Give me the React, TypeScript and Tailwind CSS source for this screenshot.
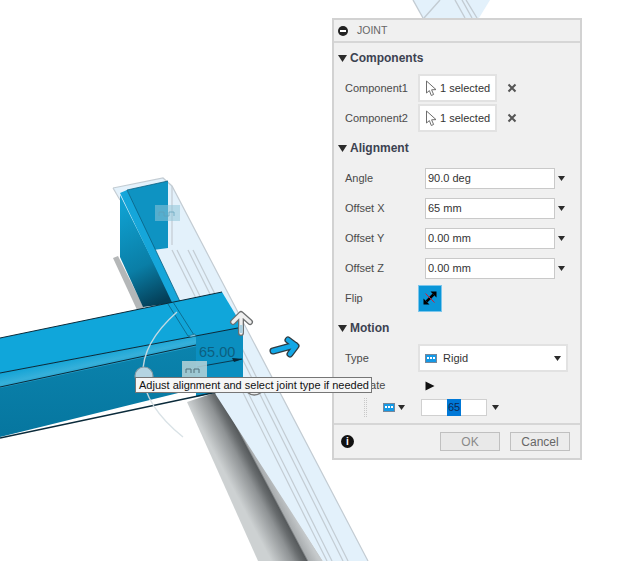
const FONT = "font-['Liberation_Sans',Arial,sans-serif]";

const Caret = ({ size = "big" }: { size?: "big" | "small" }) => (
  <svg width={size === "big" ? 9 : 7} height={size === "big" ? 7 : 5} viewBox="0 0 9 7" preserveAspectRatio="none">
    <path d="M0 0H9L4.5 7Z" fill="#2b2b2b" />
  </svg>
);

const CursorIcon = () => (
  <svg width="13" height="17" viewBox="0 0 13 17">
    <path d="M1.5 1V13L4.4 10.6L6.3 15.5L8.6 14.5L6.6 9.8L11 9.6Z" fill="#fff" stroke="#6e6e6e" strokeWidth="1" />
  </svg>
);

const RigidIcon = ({ w = 12 }: { w?: number }) => (
  <svg width={w} height="9" viewBox="0 0 12 9">
    <rect x="0.5" y="0.5" width="11" height="8" fill="#1499e6" stroke="#77879a" />
    <path d="M2 3h2v2H2zM5 3h2v2H5zM8 3h2v2H8z" fill="#fff" />
  </svg>
);

const SectionHead = ({ label }: { label: string }) => (
  <div className="flex h-[30px] items-center gap-[3px] pl-[4px]">
    <Caret />
    <span className="text-[12px] font-bold text-[#3c4250]">{label}</span>
  </div>
);

const Row = ({ label, children }: { label: string; children: React.ReactNode }) => (
  <div className="flex h-[30px] items-center pl-[11px]">
    <span className="w-[73px] text-[11px] text-[#4a4a4a]">{label}</span>
    {children}
  </div>
);

const SelectionRow = ({ label }: { label: string }) => (
  <Row label={label}>
    <div className="flex h-[28px] w-[79px] items-center gap-[2px] border-2 border-[#e2e2e2] bg-white pl-[5px] text-[11px] text-[#333]">
      <CursorIcon />
      <span>1 selected</span>
    </div>
    <svg className="ml-[10px]" width="10" height="10" viewBox="0 0 10 10">
      <path d="M1.5 1.5L8.5 8.5M8.5 1.5L1.5 8.5" stroke="#555" strokeWidth="2" />
    </svg>
  </Row>
);

const ValueRow = ({ label, value }: { label: string; value: string }) => (
  <div className="flex h-[30px] items-center pl-[11px]">
    <span className="w-[80px] text-[11px] text-[#4a4a4a]">{label}</span>
    <div className="flex h-[21px] w-[130px] items-center border border-[#c9c9c9] bg-white pl-[2px] text-[11px] text-[#333]">
      {value}
    </div>
    <div className="ml-[2px] flex w-[8px] justify-center">
      <Caret size="small" />
    </div>
  </div>
);

const JointPanel = () => (
  <div className={`absolute left-[332px] top-[18px] flex h-[442px] w-[250px] flex-col border-2 border-[#d2d2d2] bg-[#f0f0f0] ${FONT}`}>
    <div className="flex h-[23px] shrink-0 items-center gap-[9px] border-b-2 border-[#d6d6d6] pl-[4px]">
      <span className="flex h-[10px] w-[10px] items-center justify-center rounded-full bg-[#222]">
        <span className="h-[2px] w-[6px] bg-white" />
      </span>
      <span className="text-[10.5px] text-[#666]">JOINT</span>
    </div>

    <SectionHead label="Components" />
    <SelectionRow label="Component1" />
    <SelectionRow label="Component2" />

    <SectionHead label="Alignment" />
    <ValueRow label="Angle" value="90.0 deg" />
    <ValueRow label="Offset X" value="65 mm" />
    <ValueRow label="Offset Y" value="0.00 mm" />
    <ValueRow label="Offset Z" value="0.00 mm" />
    <Row label="Flip">
      <div className="flex h-[27px] w-[24px] items-center justify-center border border-[#7cc6ec] bg-[#0a96d8]">
        <svg width="16" height="16" viewBox="0 0 16 16">
          <path d="M4.5 11.5L11.5 4.5" stroke="#000" strokeWidth="2.5" />
          <path d="M8.5 1.5H14.5V7.5Z M1.5 8.5V14.5H7.5Z" fill="#000" />
          <path d="M3.5 3.5L12.5 12.5" stroke="#e0142c" strokeWidth="1" />
        </svg>
      </div>
    </Row>

    <SectionHead label="Motion" />
    <Row label="Type">
      <div className="flex h-[28px] w-[150px] items-center border-2 border-[#e2e2e2] bg-white pl-[5px] pr-[5px] text-[11px] text-[#333]">
        <RigidIcon />
        <span className="ml-[6px] flex-1">Rigid</span>
        <Caret size="small" />
      </div>
    </Row>
    <div className="flex h-[25px] items-center pl-[11px]">
      <span className="w-[80px] text-[11px] text-[#4a4a4a]">Animate</span>
      <svg width="10" height="10" viewBox="0 0 10 10">
        <path d="M0.5 0.5L9.5 5L0.5 9.5Z" fill="#111" />
      </svg>
    </div>
    <div className="flex h-[25px] items-start">
      <div className="ml-[30px] h-[19px] w-[3px] border-x border-dotted border-[#c8c8c8]" />
      <div className="ml-[16px] mt-[5px] flex items-center gap-[3px]">
        <RigidIcon />
        <Caret size="small" />
      </div>
      <div className="ml-[16px] mt-[1px] flex h-[17px] w-[66px] items-center justify-center border border-[#d0d0d0] bg-white text-[11px] text-[#333]">
        <span className="bg-[#0078d7] px-px text-[#0b2a55]">65</span>
      </div>
      <div className="ml-[5px] mt-[7px]">
        <Caret size="small" />
      </div>
    </div>

    <div className="flex flex-1 items-center border-t-2 border-[#d6d6d6] pl-[7px] pr-[10px]">
      <span className="flex h-[13px] w-[13px] items-center justify-center rounded-full bg-[#111] text-[10px] font-bold leading-none text-white">i</span>
      <div className="ml-auto flex gap-[10px]">
        <button className="h-[19px] w-[60px] border border-[#c0c0c0] bg-[#e9e9e9] text-[12px] text-[#8a8a8a]">OK</button>
        <button className="h-[19px] w-[60px] border border-[#c0c0c0] bg-[#ececec] text-[12px] text-[#666]">Cancel</button>
      </div>
    </div>
  </div>
);

const Scene = () => (
  <svg className="absolute inset-0" width="643" height="561" viewBox="0 0 643 561">
    <defs>
      {/* skewed so the shading runs along the beam */}
      <linearGradient id="grayBeam" gradientUnits="userSpaceOnUse" x1="0" y1="0" x2="48" y2="0" gradientTransform="matrix(1 0 0.53 1 -26 0)">
        <stop offset="0" stopColor="#cdd1d2" />
        <stop offset="0.45" stopColor="#8e9294" />
        <stop offset="0.62" stopColor="#686c6e" />
        <stop offset="0.74" stopColor="#565a5c" />
        <stop offset="0.78" stopColor="#a9adaf" />
        <stop offset="1" stopColor="#c5c9cb" />
      </linearGradient>
      <linearGradient id="wallShade" gradientUnits="userSpaceOnUse" x1="120" y1="210" x2="165" y2="300">
        <stop offset="0" stopColor="#0f9fcf" />
        <stop offset="0.6" stopColor="#0a7ea6" />
        <stop offset="1" stopColor="#043f58" />
      </linearGradient>
      <linearGradient id="frontFace" x1="0" y1="0" x2="0" y2="1">
        <stop offset="0" stopColor="#0c86b0" />
        <stop offset="1" stopColor="#06769f" />
      </linearGradient>
      <linearGradient id="bend" gradientUnits="userSpaceOnUse" x1="125" y1="345" x2="130" y2="368">
        <stop offset="0" stopColor="#0fa2d5" />
        <stop offset="0.5" stopColor="#36b0da" />
        <stop offset="1" stopColor="#0b8ab6" />
      </linearGradient>
    </defs>

    {/* gray lower beam */}
    <path d="M187 402L217 392L323 561H258Z" fill="url(#grayBeam)" />
    <path d="M113 258L118 256L144 308L138 312Z" fill="#b4b7b8" />

    {/* ghost channel */}
    <path d="M113 188L163 178L172 186L368 561H323L216 395L153 250Z" fill="#e3f1fb" />
    <path d="M413 0L423 18H479L490 0Z" fill="#e3f1fb" />
    <g fill="none" stroke="#c3ccd3" strokeWidth="1.2">
      <path d="M113 188L163 178L172 186L368 561" />
      <path d="M113 188L120 200" />
      <path d="M172 250L327 561" />
      <path d="M177 250L332 561" />
      <path d="M188 250L343 561" />
      <path d="M193 250L348 561" />
      <path d="M172 186V245" />
      <path d="M413 0L423 18M440 0L424 18M455 0L465 18M462 0L472 18M466 0L477 18" strokeWidth="1.4" />
    </g>

    {/* upright wall */}
    <path d="M120 195V257L143 307L174 303Z" fill="url(#wallShade)" />
    <path d="M127 190L168 181V248L153 250Z" fill="#0e93c2" />
    <path d="M120 193L127 190L195 333L188 336Z" fill="#15a6da" />
    <path d="M127 190L195 333" stroke="#0b5f80" strokeWidth="0.8" fill="none" />
    <path d="M127 190L168 181" stroke="#0b5f80" strokeWidth="0.8" fill="none" />
    <path d="M155 205H180V221H155Z" fill="#8fc4d8" opacity="0.55" />
    <path d="M159 216V212H164V216H169V212H174V216" stroke="#5f9fb8" fill="none" opacity="0.7" />

    {/* horizontal beam */}
    <path d="M0 338L222 292L243 327L0 373Z" fill="#10a6da" />
    <path d="M0 373L243 327V377L0 437Z" fill="url(#frontFace)" />
    <path d="M0 373L196 336L198 346L0 388Z" fill="url(#bend)" />
    <path d="M196 336L243 327V377L217 392L196 397Z" fill="#0b8fc0" />
    <path d="M0 338L222 292" stroke="#0a2a3a" strokeWidth="1" fill="none" />
    <path d="M0 373L243 327" stroke="#0a2a3a" strokeWidth="1" fill="none" />
    <path d="M0 387L196 345" stroke="#0a2a3a" strokeWidth="1" fill="none" />
    <path d="M0 438L217 392" stroke="#0a2a3a" strokeWidth="1.4" fill="none" />
    <path d="M173 302L194 335" stroke="#0b5f80" strokeWidth="0.8" fill="none" />
    <path d="M168 304L188 336" stroke="#0b5f80" strokeWidth="0.8" fill="none" />
    <path d="M188 336L195 334L196 336L191 337Z" fill="#7fc7e0" stroke="#0b5f80" strokeWidth="0.6" />

    {/* dimension */}
    <path d="M197 367L242 359" stroke="#0a3a50" strokeWidth="1" />
    <path d="M243 359L232 358L234 362Z" fill="#06283a" />
    <text x="199" y="357" fontFamily="Liberation Sans" fontSize="14.5" fill="#0c5f80">65.00</text>
    <rect x="182" y="361" width="25" height="16" fill="#b7d4d8" opacity="0.85" />
    <path d="M186 373V369H191V373M194 373V369H199V373" stroke="#52707a" strokeWidth="1" fill="none" />

    {/* rotate arc + handles */}
    <path d="M177 312Q106 375 183 437" fill="none" stroke="#d5dfe3" strokeWidth="1.4" opacity="0.9" />
    <circle cx="144" cy="376" r="9" fill="#b4d4e2" stroke="#8a9aa2" strokeWidth="1.2" />
    <path d="M247 392Q254 398 262 392" fill="#eceeef" stroke="#777" strokeWidth="1.4" />

    {/* up arrow */}
    <path d="M241 333V316M233 322L241 314L250 322" fill="none" stroke="#6d6f70" strokeWidth="6" strokeLinecap="round" strokeLinejoin="round" />
    <path d="M241 333V316M233 322L241 314L250 322" fill="none" stroke="#efefef" strokeWidth="3.4" strokeLinecap="round" strokeLinejoin="round" />
    <path d="M241 325V333" stroke="#a9cfe0" strokeWidth="3.4" />

    {/* translate arrow */}
    <path d="M273 351L295 345M288 340L296 346L290 354" fill="none" stroke="#2f3b42" strokeWidth="7" strokeLinecap="round" strokeLinejoin="round" />
    <path d="M273 351L295 345M288 340L296 346L290 354" fill="none" stroke="#12a7e6" strokeWidth="4.5" strokeLinecap="round" strokeLinejoin="round" />
  </svg>
);

export default function App() {
  return (
    <div className={`relative h-[561px] w-[643px] overflow-hidden bg-white ${FONT}`}>
      <Scene />
      <JointPanel />
      <div className="absolute left-[135px] top-[377px] flex h-[16px] w-[237px] items-center whitespace-nowrap border border-[#767676] bg-[#f6f6f6] pl-[3px] font-['Liberation_Sans',sans-serif] text-[11px] leading-none text-[#111]">
        Adjust alignment and select joint type if needed
      </div>
    </div>
  );
}
